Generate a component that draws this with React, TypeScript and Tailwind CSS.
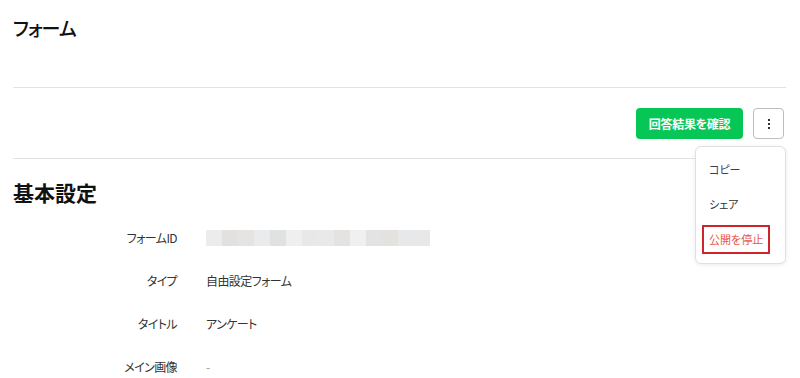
import React from "react";

const idBlocks = [
  "#ececec", "#e3e1df", "#e6e3e3", "#eaebed", "#dfe2e0", "#efefef", "#e8e8e8",
  "#e9e9e9", "#e4e3e1", "#f0f0f0", "#e3e3e3", "#e4e2df", "#e7e8ea", "#e8e8e8",
];

function Row({ label, children }: { label: string; children: React.ReactNode }) {
  return (
    <div className="flex h-[43px] items-center">
      <div className="w-[164px] shrink-0 text-right text-[12px] tracking-[-0.6px] text-[#333]">{label}</div>
      <div className="ml-[29px] flex items-center text-[12px] tracking-[-0.6px] text-[#333]">{children}</div>
    </div>
  );
}

export default function App() {
  return (
    <div
      className="relative h-[378px] w-full overflow-hidden bg-white pl-[13px] pr-[14px]"
      style={{ fontFamily: '"Noto Sans CJK JP", "Noto Sans", sans-serif', fontFeatureSettings: '"palt"' }}
    >
      <div className="h-[88px] border-b border-[#e2e2e2] pt-[14px]">
        <h1 className="text-[19px] font-medium leading-[28px] tracking-[-1px] text-[#111]">フォーム</h1>
      </div>
      <div className="flex h-[71px] items-start justify-end gap-[10px] border-b border-[#e2e2e2] pr-[2px] pt-[20px]">
        <button className="flex h-[31px] w-[107px] items-center justify-center rounded-[4px] bg-[#06c755] text-[12px] font-bold tracking-[-0.3px] text-white">
          回答結果を確認
        </button>
        <button className="flex h-[31px] w-[31px] flex-col items-center justify-center gap-[2px] rounded-[4px] border border-[#bdbdbd] bg-white">
          <span className="block h-[2px] w-[2px] bg-[#333]" />
          <span className="block h-[2px] w-[2px] bg-[#333]" />
          <span className="block h-[2px] w-[2px] bg-[#333]" />
        </button>
      </div>
      <h2 className="mt-[19px] text-[21px] font-bold leading-[28px] text-[#111]">基本設定</h2>
      <div className="mt-[10px] flex flex-col">
        <Row label="フォームID">
          <div className="flex h-[16px]">
            {idBlocks.map((c, i) => (
              <div key={i} className="h-[16px] w-[16px]" style={{ backgroundColor: c }} />
            ))}
          </div>
        </Row>
        <Row label="タイプ">自由設定フォーム</Row>
        <Row label="タイトル">アンケート</Row>
        <Row label="メイン画像"><span className="text-[#999]">-</span></Row>
      </div>

      <div className="absolute right-[14px] top-[146px] box-border flex h-[118px] w-[91px] flex-col items-start gap-[6px] rounded-[6px] border border-[#e0e0e0] bg-white px-[6px] pt-[8px] shadow-[0_1px_4px_rgba(0,0,0,0.08)]">
        <div className="h-[29px] px-[7px] text-[11px] leading-[29px] text-[#3d3a5c]">コピー</div>
        <div className="h-[29px] px-[7px] text-[11px] leading-[29px] text-[#333]">シェア</div>
        <div className="box-border h-[29px] border-2 border-[#d0242c] px-[5px] text-[11px] leading-[25px] text-[#e8564d]">
          公開を停止
        </div>
      </div>
    </div>
  );
}
